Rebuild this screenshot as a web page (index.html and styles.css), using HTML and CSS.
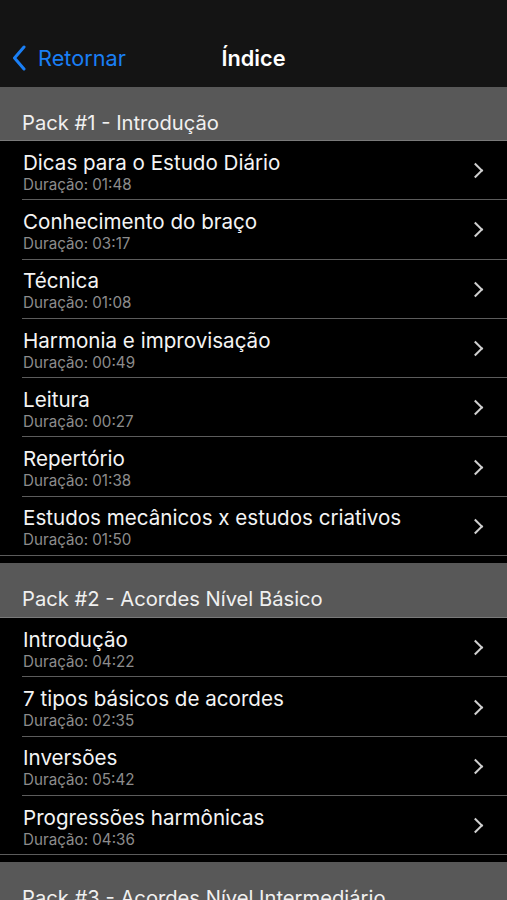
FILE: index.html
```html
<!DOCTYPE html>
<html lang="pt">
<head>
    <meta charset="UTF-8">
    <meta name="viewport" content="width=device-width, initial-scale=1.0">
    <title>Índice</title>
    <link rel="stylesheet" href="styles.css">
</head>
<body>

    <div class="navbar">
        <a class="back" href="#">
            <svg class="back-icon" width="14" height="26" viewBox="0 0 14 26">
                <path d="M12 2 L2.5 13 L12 24" fill="none" stroke="#1a7ff5" stroke-width="3" stroke-linecap="round" stroke-linejoin="round"/>
            </svg>
            <span>Retornar</span>
        </a>
        <div class="nav-title">Índice</div>
        <div></div>
    </div>

    <!-- Pack 1 -->
    <div class="section first">
        <div class="section-header">Pack #1 - Introdução</div>
        <ul class="lessons">
            <li class="lesson"><div class="lesson-text"><div class="lesson-title">Dicas para o Estudo Diário</div><div class="lesson-time">Duração: 01:48</div></div><span class="chevron"></span></li>
            <li class="lesson"><div class="lesson-text"><div class="lesson-title">Conhecimento do braço</div><div class="lesson-time">Duração: 03:17</div></div><span class="chevron"></span></li>
            <li class="lesson"><div class="lesson-text"><div class="lesson-title">Técnica</div><div class="lesson-time">Duração: 01:08</div></div><span class="chevron"></span></li>
            <li class="lesson"><div class="lesson-text"><div class="lesson-title">Harmonia e improvisação</div><div class="lesson-time">Duração: 00:49</div></div><span class="chevron"></span></li>
            <li class="lesson"><div class="lesson-text"><div class="lesson-title">Leitura</div><div class="lesson-time">Duração: 00:27</div></div><span class="chevron"></span></li>
            <li class="lesson"><div class="lesson-text"><div class="lesson-title">Repertório</div><div class="lesson-time">Duração: 01:38</div></div><span class="chevron"></span></li>
            <li class="lesson"><div class="lesson-text"><div class="lesson-title">Estudos mecânicos x estudos criativos</div><div class="lesson-time">Duração: 01:50</div></div><span class="chevron"></span></li>
        </ul>
    </div>

    <!-- Pack 2 -->
    <div class="section">
        <div class="section-header">Pack #2 - Acordes Nível Básico</div>
        <ul class="lessons">
            <li class="lesson"><div class="lesson-text"><div class="lesson-title">Introdução</div><div class="lesson-time">Duração: 04:22</div></div><span class="chevron"></span></li>
            <li class="lesson"><div class="lesson-text"><div class="lesson-title">7 tipos básicos de acordes</div><div class="lesson-time">Duração: 02:35</div></div><span class="chevron"></span></li>
            <li class="lesson"><div class="lesson-text"><div class="lesson-title">Inversões</div><div class="lesson-time">Duração: 05:42</div></div><span class="chevron"></span></li>
            <li class="lesson"><div class="lesson-text"><div class="lesson-title">Progressões harmônicas</div><div class="lesson-time">Duração: 04:36</div></div><span class="chevron"></span></li>
        </ul>
    </div>

    <!-- Pack 3 -->
    <div class="section">
        <div class="section-header">Pack #3 - Acordes Nível Intermediário</div>
    </div>

</body>
</html>
```

FILE: styles.css
```css
body {
    font-family: Inter, "Noto Sans", sans-serif;
    background-color: #000;
    color: #f2f2f2;
    margin: 0;
    padding: 0;
    height: 900px;
    overflow: hidden;
}

.navbar {
    display: grid;
    grid-template-columns: 1fr auto 1fr;
    align-items: center;
    height: 87px;
    box-sizing: border-box;
    padding-top: 28px;
    background-color: #141414;
}

.back {
    display: flex;
    align-items: center;
    gap: 12px;
    padding-left: 12px;
    color: #1a7ff5;
    text-decoration: none;
    font-size: 21.7px;
}

.back-icon {
    display: block;
}

.nav-title {
    font-size: 21.7px;
    font-weight: 600;
    color: #fff;
}

.section {
    margin-top: 7px;
}

.section.first {
    margin-top: 0;
}

.section-header {
    height: 55px;
    box-sizing: border-box;
    display: flex;
    align-items: flex-end;
    padding: 0 0 6px 22px;
    background-color: #585858;
    border-bottom: 1px solid #7a7a7a;
    font-size: 20.2px;
    color: #f0f0f0;
}

.section.first .section-header {
    height: 54px;
    padding-bottom: 5px;
}

.lessons {
    list-style: none;
    margin: 0;
    padding: 0;
}

.lesson {
    display: flex;
    align-items: center;
    height: 59.3px;
    box-sizing: border-box;
    padding: 0 22px 0 23px;
    position: relative;
}

.lesson::after {
    content: "";
    position: absolute;
    left: 22px;
    right: 0;
    bottom: 0;
    height: 1px;
    background-color: #5c5c5c;
}

.lesson:last-child::after {
    left: 0;
}

.lesson-text {
    flex: 1;
    padding-top: 4px;
}

.lesson-title {
    font-size: 20.6px;
    line-height: 23px;
    color: #f4f4f4;
}

.lesson-time {
    font-size: 15.2px;
    line-height: 20px;
    margin-top: 1px;
    color: #8c8c8c;
}

.chevron {
    width: 9px;
    height: 9px;
    border-right: 2.5px solid #cfcfcf;
    border-top: 2.5px solid #cfcfcf;
    transform: rotate(45deg);
    margin-right: 4px;
}
```
